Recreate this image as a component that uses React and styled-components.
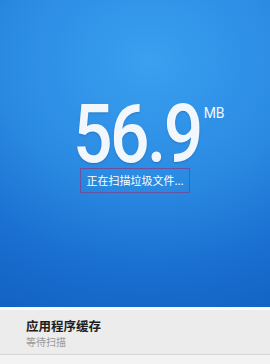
import React from "react";
import styled, { createGlobalStyle } from "styled-components";

const Global = createGlobalStyle`
  html, body { margin: 0; padding: 0; }
  body { width: 270px; height: 364px; overflow: hidden; font-family: Roboto, "Noto Sans CJK SC", sans-serif; background: #ededed; }
`;

const Page = styled.div`
  display: flex;
  flex-direction: column;
  width: 270px;
  height: 364px;
`;

const Hero = styled.div`
  height: 307px;
  flex: none;
  display: flex;
  flex-direction: column;
  align-items: center;
  background: radial-gradient(ellipse 120% 90% at 55% 20%, #3aa0ef 0%, #2a8ae2 45%, #1a6fd0 75%, #1262c2 100%);
  box-shadow: 0 1px 0 #0d56ad;
`;

const Amount = styled.div`
  align-self: flex-start;
  margin: 105px 0 0 73px;
  display: flex;
  align-items: flex-start;
  color: #f2f7fd;
`;

const Number = styled.span`
  display: inline-block;
  font-family: Roboto, sans-serif;
  font-weight: 500;
  font-size: 81px;
  line-height: 60px;
  letter-spacing: -3px;
  transform: scaleX(0.86);
  transform-origin: left center;
  margin-right: -20px;
  text-shadow: 0 1px 2px rgba(0, 40, 100, 0.25);
`;

const Unit = styled.span`
  font-family: Roboto, sans-serif;
  font-weight: 400;
  font-size: 14px;
  line-height: 14px;
  margin-top: 1px;
  margin-left: 2px;
`;

const Status = styled.div`
  margin-top: 3px;
  padding: 0 5px;
  border: 1px solid #6a52a0;
  color: #ffffff;
  font-family: "Noto Sans CJK SC", sans-serif;
  font-size: 11px;
  line-height: 23px;
`;

const Gap = styled.div`
  height: 3px;
  background: #f7fbfd;
`;

const Item = styled.div`
  display: flex;
  flex-direction: column;
  padding: 7px 0 5px 26px;
  border-bottom: 1px solid #d6d6d6;
  background: #ececec;
`;

const Title = styled.div`
  font-family: "Noto Sans CJK SC", sans-serif;
  font-size: 12.5px;
  font-weight: 700;
  color: #1e1e1e;
  line-height: 18px;
`;

const Sub = styled.div`
  font-family: "Noto Sans CJK SC", sans-serif;
  font-size: 10px;
  color: #9a9a9a;
  line-height: 14px;
`;

const Rest = styled.div`
  flex: 1;
  background: #f3f3f3;
`;

export default function App() {
  return (
    <>
      <Global />
      <Page>
        <Hero>
          <Amount>
            <Number>56.9</Number>
            <Unit>MB</Unit>
          </Amount>
          <Status>正在扫描垃圾文件...</Status>
        </Hero>
        <Gap />
        <Item>
          <Title>应用程序缓存</Title>
          <Sub>等待扫描</Sub>
        </Item>
        <Rest />
      </Page>
    </>
  );
}
